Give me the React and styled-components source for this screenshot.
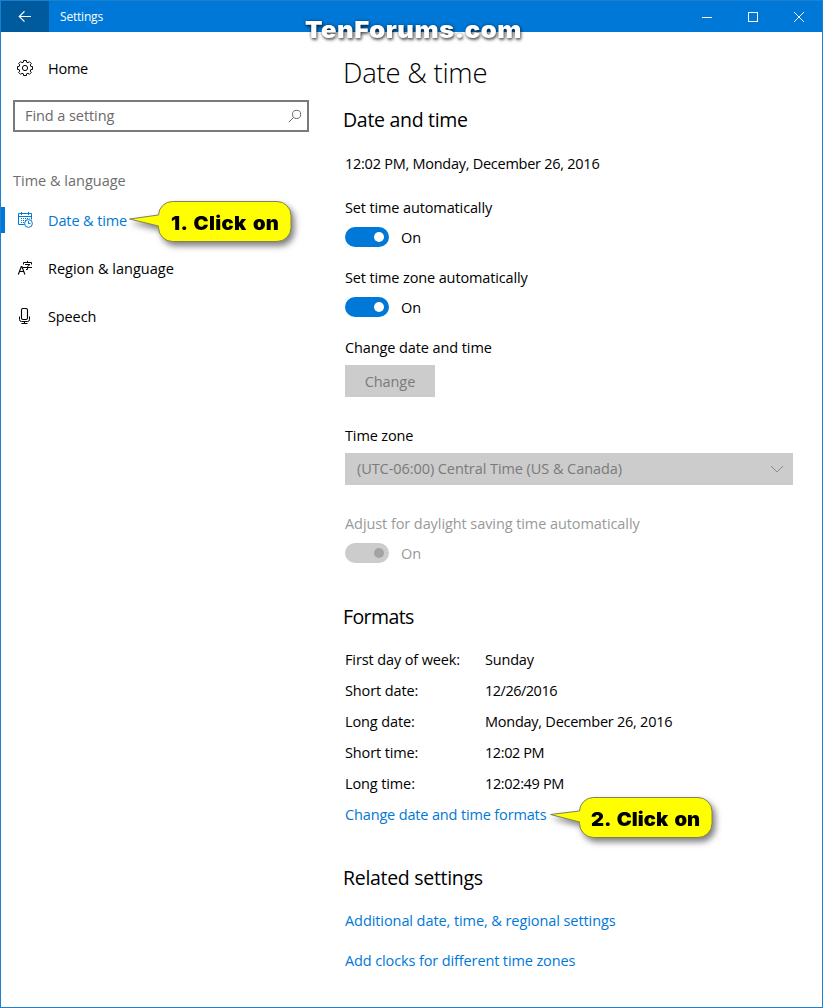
import React from "react";
import styled, { createGlobalStyle } from "styled-components";

const GlobalStyle = createGlobalStyle`
  * {
    box-sizing: border-box;
  }
  body {
    margin: 0;
    background: #fff;
    color: #000;
    font-family: "Open Sans", "Noto Sans", sans-serif;
    font-size: 14.5px;
    line-height: 20px;
  }
`;

const Window = styled.div`
  position: relative;
  width: 823px;
  height: 1008px;
  display: flex;
  flex-direction: column;
  border: 1px solid #1a80d2;
  background: #fff;
  overflow: hidden;
  white-space: nowrap;
`;

const TitleBar = styled.header`
  flex: none;
  display: flex;
  align-items: center;
  height: 31px;
  background: #0078d7;
  color: #fff;
`;

const BackButton = styled.button`
  display: flex;
  align-items: center;
  justify-content: center;
  width: 48px;
  height: 31px;
  padding: 0;
  border: none;
  background: #005a9e;
  color: #fff;
`;

const WindowTitle = styled.span`
  flex: 1;
  padding-left: 11px;
  font-size: 12px;
  letter-spacing: -0.2px;
`;

const Caption = styled.button`
  display: flex;
  align-items: center;
  justify-content: center;
  width: 46px;
  height: 31px;
  padding: 0;
  border: none;
  background: none;
  color: #fff;
`;

const Body = styled.div`
  flex: 1;
  display: flex;
`;

const Sidebar = styled.nav`
  width: 328px;
  padding-top: 12px;
`;

const NavItem = styled.a`
  display: flex;
  align-items: center;
  height: 48px;
  padding-left: ${(p) => (p.$active ? 12 : 16)}px;
  border-left: ${(p) => (p.$active ? "4px solid #0078d7" : "none")};
  color: ${(p) => (p.$active ? "#0078d7" : "#000")};
  border-image: ${(p) =>
    p.$active
      ? "linear-gradient(transparent 12px, #0078d7 12px, #0078d7 36px, transparent 36px) 1"
      : "none"};

  svg {
    flex: none;
    margin-right: 15px;
  }
`;

const Text = styled.span`
  height: 20px;
  padding-top: 1px;
  letter-spacing: ${(p) => p.$spacing ?? -0.12}px;
`;

const FieldText = styled.span`
  letter-spacing: -0.07px;
`;

const SearchBox = styled.div`
  display: flex;
  align-items: center;
  justify-content: space-between;
  width: 296px;
  height: 32px;
  margin: 8px 0 0 12px;
  padding: 0 5px 1px 10px;
  border: 2px solid #7a7a7a;
  color: #6a6a6a;
`;

const GroupLabel = styled.div`
  margin: 39px 0 5px 12px;
  color: #6d6d6d;
`;

const Content = styled.main`
  flex: 1;
  display: flex;
  flex-direction: column;
  align-items: flex-start;
  padding: 20px 0 0 16px;
`;

const PageTitle = styled.h1`
  margin: 0 0 0 -2px;
  font-size: 27.5px;
  font-weight: 300;
  line-height: 42px;
  letter-spacing: -0.25px;
`;

const Heading = styled.h2`
  margin: ${(p) => p.$top}px 0 0 -2px;
  font-size: 19.5px;
  font-weight: 400;
  line-height: 28px;
  letter-spacing: ${(p) => p.$spacing ?? -0.3}px;
`;

const Line = styled.div`
  height: 20px;
  margin-top: ${(p) => p.$top}px;
  padding-top: 1px;
  color: ${(p) => (p.$disabled ? "#999" : "#000")};
  letter-spacing: ${(p) => p.$spacing ?? -0.13}px;
`;

const Link = styled.a`
  height: 20px;
  margin-top: ${(p) => p.$top}px;
  padding-top: 1px;
  color: #0078d7;
  letter-spacing: ${(p) => p.$spacing ?? -0.12}px;
`;

const ToggleRow = styled.div`
  display: flex;
  align-items: center;
  gap: 12px;
  height: 20px;
  margin-top: 10px;
  color: ${(p) => (p.$disabled ? "#999" : "#000")};
`;

const Track = styled.div`
  display: flex;
  align-items: center;
  justify-content: flex-end;
  width: 44px;
  height: 20px;
  padding-right: 5px;
  border-radius: 10px;
  background: ${(p) => (p.$disabled ? "#ccc" : "#0078d7")};
`;

const Knob = styled.div`
  width: 10px;
  height: 10px;
  border-radius: 50%;
  background: ${(p) => (p.$disabled ? "#a3a3a3" : "#fff")};
`;

const ChangeButton = styled.button`
  width: 90px;
  height: 32px;
  margin-top: 8px;
  padding: 2px 0 0;
  border: none;
  background: #ccc;
  color: #7a7a7a;
  font: inherit;
  letter-spacing: -0.1px;
`;

const Select = styled.div`
  display: flex;
  align-items: center;
  justify-content: space-between;
  width: 448px;
  height: 32px;
  margin-top: 8px;
  padding: 0 9px 1px 12px;
  background: #ccc;
  color: #7a7a7a;
`;

const FormatTable = styled.div`
  display: grid;
  grid-template-columns: 140px auto;
  row-gap: 11px;
  margin-top: 18px;
`;

const Watermark = styled.div`
  position: absolute;
  left: 304px;
  top: 14px;
  font-family: Inter, sans-serif;
  font-size: 23px;
  font-weight: 900;
  line-height: 30px;
  letter-spacing: 0.5px;
  transform: scaleX(1.11);
  transform-origin: left;
  color: #fff;
  text-shadow: 1px 2px 3px rgba(0, 0, 0, 0.6), 0 0 3px rgba(0, 0, 0, 0.5);
`;

const CalloutBox = styled.div`
  position: absolute;
  left: ${(p) => p.$x}px;
  top: ${(p) => p.$y}px;
  display: flex;
  align-items: center;
  width: 164px;
  height: 42px;
  padding: 4px 0 0 ${(p) => p.$indent}px;
  font-family: Inter, sans-serif;
  font-size: 19px;
  font-weight: 900;

  svg {
    position: absolute;
    left: 0;
    top: 0;
    overflow: visible;
    filter: drop-shadow(3px 4px 3px rgba(0, 0, 0, 0.5));
  }
`;

const CalloutText = styled.span`
  z-index: 1;
  letter-spacing: ${(p) => p.$spacing}px;
  word-spacing: 2px;
  transform: scaleX(1.06);
  transform-origin: left;
`;

const BackIcon = () => (
  <svg width="14" height="12" viewBox="0 0 14 12" fill="none" stroke="currentColor" strokeWidth="1.2">
    <path d="M13 5.500H1.5M6.5 .3L1.3 5.500l5.2 5.2" />
  </svg>
);

const GearIcon = () => {
  const teeth = 8;
  const points = [];
  for (let i = 0; i < teeth; i++) {
    const a = (i * 2 * Math.PI) / teeth;
    [
      [-0.25, 6.1],
      [-0.19, 7.7],
      [0.19, 7.7],
      [0.25, 6.1],
    ].forEach(([da, r]) => {
      points.push(`${(8 + r * Math.sin(a + da)).toFixed(2)},${(8 - r * Math.cos(a + da)).toFixed(2)}`);
    });
  }
  return (
    <svg width="16" height="16" viewBox="0 0 16 16" fill="none" stroke="currentColor">
      <polygon points={points.join(" ")} strokeLinejoin="round" />
      <circle cx="8" cy="8" r="2.6" />
    </svg>
  );
};

const SearchIcon = () => (
  <svg width="14" height="14" viewBox="0 0 14 14" fill="none" stroke="currentColor">
    <circle cx="8.6" cy="5.4" r="4.1" />
    <path d="M5.7 8.3L.8 13.2" />
  </svg>
);

const CalendarIcon = () => (
  <svg width="16" height="16" viewBox="0 0 16 16" fill="none" stroke="currentColor">
    <path d="M7.5 12.5h-6v-11h13v6M1.5 4.5h13M4.5 0v3M11.5 0v3" />
    <path d="M4 6.5h8.5M4 8.5h5M4 10.5h3" strokeDasharray="1 1" />
    <circle cx="11.5" cy="11.5" r="3.9" />
    <path d="M11.5 9v2.5h2" />
  </svg>
);

const LanguageIcon = () => (
  <svg width="16" height="16" viewBox="0 0 16 16" fill="none" stroke="currentColor">
    <path d="M1.3 14.5L4.3 6.5h.6l3 8M2.4 11.5h4.4" strokeWidth="1.1" />
    <path d="M10.5 .8v1.7M6.5 4.5v-2h8v2M8 4.5h5L10.6 6.4v3.1H9M6 7.5h9" />
  </svg>
);

const MicIcon = () => (
  <svg width="16" height="16" viewBox="0 0 16 16" fill="none" stroke="currentColor">
    <rect x="4.5" y=".5" width="6" height="11" rx="1.5" strokeWidth="1.1" />
    <path d="M2.5 8.5v3q0 2 2 2h6q2 0 2-2v-3M7.5 13.5v2M4.5 15.5h6" />
  </svg>
);

const Toggle = ({ disabled }) => (
  <ToggleRow $disabled={disabled}>
    <Track $disabled={disabled}>
      <Knob $disabled={disabled} />
    </Track>
    <Text>On</Text>
  </ToggleRow>
);

const Callout = ({ x, y, tipY, indent, spacing, children }) => (
  <CalloutBox $x={x} $y={y} $indent={indent}>
    <svg width="164" height="42">
      <path
        d={`M43.5 .5H148a14 14 0 0 1 14 14V26.500a14 14 0 0 1-14 14H43.500a14 14 0 0 1-14-14V25L.5 ${tipY}L29.500 14a14 14 0 0 1 14-13.500z`}
        fill="#ff0"
        stroke="#808060"
      />
    </svg>
    <CalloutText $spacing={spacing}>{children}</CalloutText>
  </CalloutBox>
);

// label, value, letter spacing of the value
const formats = [
  ["First day of week:", "Sunday", -0.2],
  ["Short date:", "12/26/2016", -0.5],
  ["Long date:", "Monday, December 26, 2016", -0.25],
  ["Short time:", "12:02 PM", -0.42],
  ["Long time:", "12:02:49 PM", -0.36],
];

const App = () => {
  return (
    <>
      <GlobalStyle />
      <Window>
        <TitleBar>
          <BackButton>
            <BackIcon />
          </BackButton>
          <WindowTitle>Settings</WindowTitle>
          <Caption>
            <svg width="10" height="10" stroke="currentColor">
              <path d="M0 5.500h10" />
            </svg>
          </Caption>
          <Caption>
            <svg width="10" height="10" fill="none" stroke="currentColor">
              <rect x=".5" y=".5" width="9" height="9" />
            </svg>
          </Caption>
          <Caption>
            <svg width="10" height="10" stroke="currentColor">
              <path d="M0 0l10 10M10 0L0 10" />
            </svg>
          </Caption>
        </TitleBar>
        <Body>
          <Sidebar>
            <NavItem>
              <GearIcon />
              <Text $spacing={-0.25}>Home</Text>
            </NavItem>
            <SearchBox>
              <FieldText>Find a setting</FieldText>
              <SearchIcon />
            </SearchBox>
            <GroupLabel>Time &amp; language</GroupLabel>
            <NavItem $active>
              <CalendarIcon />
              <Text>Date &amp; time</Text>
            </NavItem>
            <NavItem>
              <LanguageIcon />
              <Text $spacing={0}>Region &amp; language</Text>
            </NavItem>
            <NavItem>
              <MicIcon />
              <Text>Speech</Text>
            </NavItem>
          </Sidebar>
          <Content>
            <PageTitle>Date &amp; time</PageTitle>
            <Heading $top={12}>Date and time</Heading>
            <Line $top={19} $spacing={-0.26}>
              12:02 PM, Monday, December 26, 2016
            </Line>
            <Line $top={24}>Set time automatically</Line>
            <Toggle />
            <Line $top={20}>Set time zone automatically</Line>
            <Toggle />
            <Line $top={20} $spacing={-0.1}>
              Change date and time
            </Line>
            <ChangeButton>Change</ChangeButton>
            <Line $top={28}>Time zone</Line>
            <Select>
              <FieldText>(UTC-06:00) Central Time (US &amp; Canada)</FieldText>
              <svg width="14" height="8" fill="none" stroke="#8a8a8a">
                <path d="M1 1l6 6 6-6" />
              </svg>
            </Select>
            <Line $top={28} $spacing={-0.08} $disabled>
              Adjust for daylight saving time automatically
            </Line>
            <Toggle disabled />
            <Heading $top={40} $spacing={-0.6}>
              Formats
            </Heading>
            <FormatTable>
              {formats.map(([label, value, spacing]) => (
                <React.Fragment key={label}>
                  <Text>{label}</Text>
                  <Text $spacing={spacing}>{value}</Text>
                </React.Fragment>
              ))}
            </FormatTable>
            <Link $top={11} $spacing={-0.15}>
              Change date and time formats
            </Link>
            <Heading $top={40}>Related settings</Heading>
            <Link $top={18} $spacing={-0.08}>
              Additional date, time, &amp; regional settings
            </Link>
            <Link $top={20}>Add clocks for different time zones</Link>
          </Content>
        </Body>
        <Watermark>TenForums.com</Watermark>
        <Callout x={128} y={200} tipY={18} indent={42} spacing={0.3}>
          1. Click on
        </Callout>
        <Callout x={549} y={796} tipY={17.5} indent={41} spacing={0.05}>
          2. Click on
        </Callout>
      </Window>
    </>
  );
};

export default App;
